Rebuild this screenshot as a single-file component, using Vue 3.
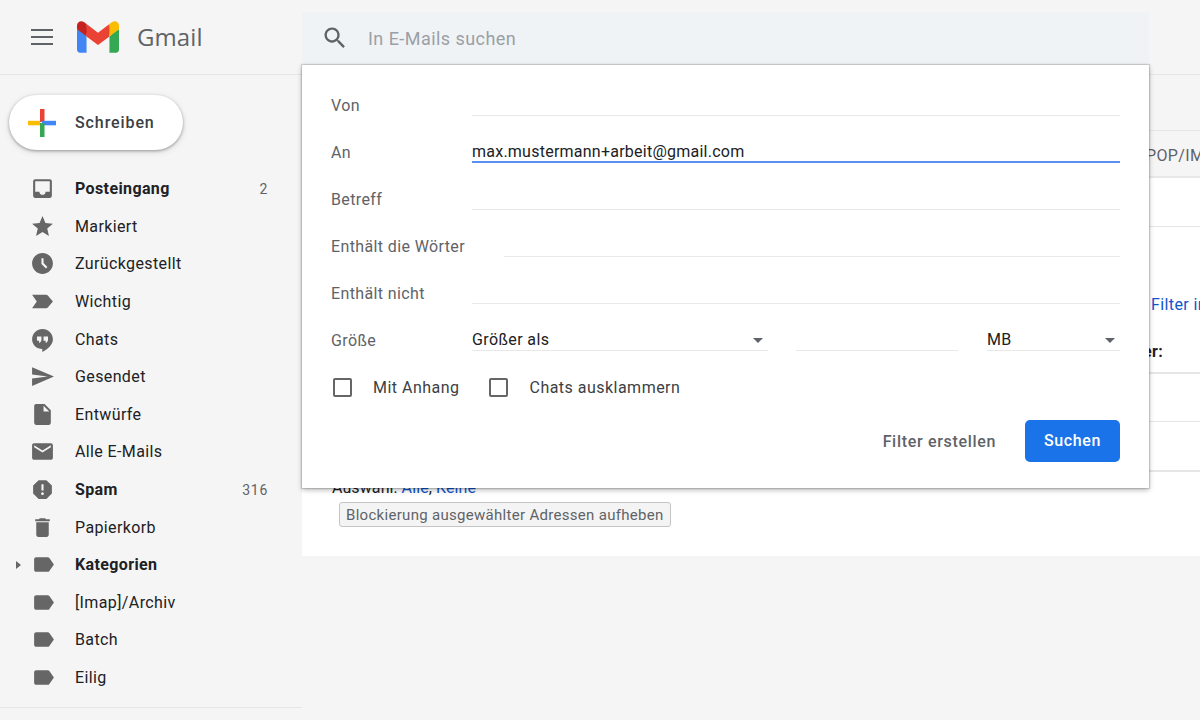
<script setup>
const P = {
  inbox: 'M19 3H5c-1.1 0-2 .9-2 2v14c0 1.1.9 2 2 2h14c1.1 0 2-.9 2-2V5c0-1.1-.9-2-2-2zm0 12h-4c0 1.66-1.34 3-3 3s-3-1.34-3-3H5V5h14v10z',
  star: 'M12 17.27L18.18 21l-1.64-7.03L22 9.24l-7.19-.61L12 2 9.19 8.63 2 9.24l5.46 4.73L5.82 21z',
  clock: 'M11.99 2C6.47 2 2 6.48 2 12s4.47 10 9.99 10C17.52 22 22 17.52 22 12S17.52 2 11.99 2zm3.3 14.71L11 12.41V7h2v4.59l3.71 3.71-1.42 1.41z',
  important: 'M2 18.5l4.5-6.5L2 5.5h13.5c.6 0 1.2.3 1.6.8L22 12l-4.9 5.7c-.4.5-1 .8-1.6.8z',
  chat: 'M12 2C6.500 2 2 6.400 2 11.800c0 5.300 4.300 9.400 9.800 9.400V24c5.700-2.700 10.200-7.300 10.200-12.200C22 6.400 17.500 2 12 2zM11 12.300c0 1.500-1 2.600-2.300 3v-2.200H6.700V9H11v3.300zm6.300 0c0 1.500-1 2.600-2.300 3v-2.200h-2V9h4.300v3.300z',
  send: 'M2.010 21L23 12 2.010 3 2 10l15 2-15 2z',
  draft: 'M14 2H6c-1.100 0-1.990.9-1.990 2L4 20c0 1.100.89 2 1.990 2H18c1.100 0 2-.9 2-2V8l-6-6zm-1 7V3.500L18.500 9H13z',
  mail: 'M20 4H4c-1.100 0-1.990.9-1.990 2L2 18c0 1.100.9 2 2 2h16c1.100 0 2-.9 2-2V6c0-1.100-.9-2-2-2zm0 4l-8 5-8-5V6l8 5 8-5v2z',
  spam: 'M15.730 3H8.270L3 8.270v7.460L8.270 21h7.460L21 15.730V8.270L15.730 3zM12 17.300c-.72 0-1.300-.58-1.300-1.300 0-.72.58-1.300 1.300-1.300.72 0 1.300.58 1.300 1.300 0 .72-.58 1.300-1.300 1.300zm1-4.300h-2V7h2v6z',
  trash: 'M6 19c0 1.100.9 2 2 2h8c1.100 0 2-.9 2-2V7H6v12zM19 4h-3.500l-1-1h-5l-1 1H5v2h14V4z',
  label: 'M17.630 5.840C17.270 5.330 16.670 5 16 5L5 5.010C3.900 5.010 3 5.900 3 7v10c0 1.100.9 1.990 2 1.990L16 19c.67 0 1.270-.33 1.630-.84L22 12l-4.370-6.160z',
}
const nav = [
  { t: 'Posteingang', i: 'inbox', b: true, n: '2' },
  { t: 'Markiert', i: 'star' },
  { t: 'Zurückgestellt', i: 'clock' },
  { t: 'Wichtig', i: 'important' },
  { t: 'Chats', i: 'chat' },
  { t: 'Gesendet', i: 'send' },
  { t: 'Entwürfe', i: 'draft' },
  { t: 'Alle E-Mails', i: 'mail' },
  { t: 'Spam', i: 'spam', b: true, n: '316' },
  { t: 'Papierkorb', i: 'trash' },
  { t: 'Kategorien', i: 'label', b: true, arrow: true },
  { t: '[Imap]/Archiv', i: 'label' },
  { t: 'Batch', i: 'label' },
  { t: 'Eilig', i: 'label' },
]
const fields = [
  { l: 'Von', v: '' },
  { l: 'An', v: 'max.mustermann+arbeit@gmail.com', focus: true },
  { l: 'Betreff', v: '' },
  { l: 'Enthält die Wörter', v: '', wide: true },
  { l: 'Enthält nicht', v: '' },
]
const search = 'M15.5 14h-.79l-.28-.27C15.41 12.59 16 11.11 16 9.5 16 5.91 13.09 3 9.5 3S3 5.91 3 9.5 5.91 16 9.5 16c1.61 0 3.09-.59 4.23-1.57l.27.28v.79l5 4.99L20.49 19l-4.99-5zm-6 0C7.010 14 5 11.990 5 9.500S7.010 5 9.500 5 14 7.010 14 9.500 11.990 14 9.500 14z'
</script>

<template>
  <div class="page">
    <header class="top">
      <div class="brand">
        <div class="burger"><i></i><i></i><i></i></div>
        <svg class="logo" viewBox="0 0 256 193">
          <path fill="#4285F4" d="M58.182 192.050V93.140L27.507 65.077 0 49.504v125.091c0 9.658 7.825 17.455 17.455 17.455h40.727z"/>
          <path fill="#34A853" d="M197.818 192.050h40.727c9.659 0 17.455-7.826 17.455-17.455V49.505l-31.156 17.837-27.026 25.798v98.910z"/>
          <path fill="#EA4335" d="M58.182 93.140l-4.174-38.647 4.174-36.989L128 69.868l69.818-52.364 4.669 34.992-4.669 40.644L128 145.504z"/>
          <path fill="#FBBC04" d="M197.818 17.504V93.140L256 49.504V26.231c0-21.585-24.640-33.890-41.890-20.945l-16.292 12.218z"/>
          <path fill="#C5221F" d="M0 49.504l26.759 20.070L58.182 93.140V17.504L41.890 5.286C24.610-7.660 0 4.646 0 26.230v23.273z"/>
        </svg>
        <span class="wordmark">Gmail</span>
      </div>
      <div class="searchbar">
        <svg class="searchicon" viewBox="0 0 24 24"><path :d="search" fill="#5f6368"/></svg>
        <span class="placeholder">In E-Mails suchen</span>
      </div>
    </header>

    <div class="body">
      <aside class="side">
        <div class="compose">
          <svg class="plus" viewBox="0 0 28 28">
            <rect x="12" y="0" width="4.500" height="13" fill="#ea4335"/>
            <rect x="14" y="11.800" width="14" height="4.500" fill="#4285f4"/>
            <rect x="12" y="14" width="4.500" height="14" fill="#34a853"/>
            <rect x="0" y="11.800" width="12" height="4.500" fill="#fbbc04"/>
          </svg>
          <span>Schreiben</span>
        </div>
        <ul class="nav">
          <li v-for="r in nav" :key="r.t" class="row" :class="{ bold: r.b }">
            <span class="slot"><i v-if="r.arrow" class="tri"></i></span>
            <svg class="ic" :class="{ lab: r.i === 'label' }" viewBox="0 0 24 24"><path :d="P[r.i]" fill="#666" fill-rule="evenodd"/></svg>
            <span class="rt">{{ r.t }}</span>
            <span v-if="r.n" class="count">{{ r.n }}</span>
          </li>
        </ul>
      </aside>

      <main class="main">
        <div class="toolbar"></div>
        <div class="tabs"><span>POP/IMAP</span></div>
        <div class="panel">
          <div class="line l1"></div>
          <div class="filterlink"><a>Filter importieren</a></div>
          <div class="blocked"><b>er:</b></div>
          <div class="line l2"></div>
          <div class="line l3"></div>
          <div class="line l4"></div>
          <div class="choose">Auswahl: <a>Alle</a>, <a>Keine</a></div>
          <div class="unblockwrap"><span class="unblock">Blockierung ausgewählter Adressen aufheben</span></div>
        </div>
      </main>
    </div>

    <section class="popup">
      <div v-for="f in fields" :key="f.l" class="frow">
        <label class="flabel" :class="{ auto: f.wide }">{{ f.l }}</label>
        <div class="field" :class="{ focus: f.focus }">{{ f.v }}</div>
      </div>
      <div class="frow">
        <label class="flabel">Größe</label>
        <div class="sel s1"><span>Größer als</span><i class="caret"></i></div>
        <div class="sizeinput"></div>
        <div class="sel s2"><span>MB</span><i class="caret"></i></div>
      </div>
      <div class="checks">
        <i class="box"></i><span class="cl c1">Mit Anhang</span>
        <i class="box"></i><span class="cl">Chats ausklammern</span>
      </div>
      <div class="actions">
        <span class="fbtn">Filter erstellen</span>
        <span class="go">Suchen</span>
      </div>
    </section>
  </div>
</template>

<style>
html, body { margin: 0; background: #f5f5f5; }
</style>

<style scoped>
.page {
  position: relative;
  width: 1200px;
  height: 720px;
  overflow: hidden;
  background: #f5f5f5;
  font-family: Roboto, "Liberation Sans", sans-serif;
  font-size: 16px;
  letter-spacing: .38px;
  color: #202124;
}
.top {
  height: 74px;
  display: flex;
  border-bottom: 1px solid #e6e6e6;
}
.brand { width: 302px; display: flex; align-items: center; padding-left: 31px; box-sizing: border-box; }
.burger { width: 22px; display: flex; flex-direction: column; gap: 5px; }
.burger i { display: block; height: 2px; background: #5f6368; }
.logo { width: 42px; height: 32px; margin-left: 24px; margin-top: -1px; }
.wordmark {
  margin-left: 18px;
  margin-top: -2px;
  font-family: "Open Sans", sans-serif;
  font-size: 24px;
  letter-spacing: .1px;
  color: #5f6368;
}
.searchbar {
  width: 847px;
  height: 53px;
  margin-top: 12px;
  display: flex;
  align-items: flex-start;
  padding-top: 12px;
  box-sizing: border-box;
  background: #f0f3f5;
}
.searchicon { width: 28px; height: 28px; margin-left: 19px; }
.placeholder { margin-left: 19px; font-size: 18px; line-height: 30px; letter-spacing: .45px; color: #9aa0a6; }
.body { display: flex; height: 645px; }
.side { width: 302px; height: 633px; flex: none; border-bottom: 1px solid #e6e6e6; box-sizing: border-box; }
.compose {
  margin: 20px 0 0 9px;
  width: 174px;
  height: 55px;
  border-radius: 28px;
  background: #fff;
  box-shadow: 0 1px 3px rgba(60,64,67,.45), 0 2px 6px rgba(60,64,67,.15);
  display: flex;
  align-items: center;
  box-sizing: border-box;
  padding-left: 19px;
  color: #3c4043;
  font-weight: 500;
  letter-spacing: .9px;
}
.plus { width: 28px; height: 28px; margin-right: 19px; }
.nav { list-style: none; margin: 20px 0 0; padding: 0; }
.row {
  height: 37.6px;
  display: flex;
  align-items: center;
  padding-right: 34px;
  color: #202124;
}
.slot { width: 30px; display: flex; padding-left: 16px; box-sizing: border-box; }
.tri { width: 0; height: 0; border-left: 5px solid #666; border-top: 4.500px solid transparent; border-bottom: 4.500px solid transparent; }
.ic { width: 25px; height: 25px; margin-right: 20px; }
.ic.lab { margin-left: 1px; margin-right: 19px; }
.rt { flex: 1; }
.bold .rt { font-weight: 700; }
.count { font-size: 14px; letter-spacing: .7px; color: #5f6368; font-weight: 400; }
.main { flex: 1; min-width: 0; }
.toolbar { height: 55px; border-bottom: 1px solid #e6e6e6; }
.tabs {
  height: 45px;
  border-bottom: 2px solid #e8e8e8;
  padding-left: 844px;
  line-height: 50px;
  font-size: 16px;
  white-space: nowrap;
  color: #5f6368;
  overflow: hidden;
}
.panel { background: #fff; height: 378px; overflow: hidden; }
.line { height: 1px; background: #e6e6e6; }
.l1 { margin-top: 48px; }
.filterlink { margin-top: 67px; padding-left: 849px; line-height: 22px; white-space: nowrap; color: #1155cc; }
.blocked { margin-top: 25px; padding-left: 841px; line-height: 22px; white-space: nowrap; color: #202124; font-size: 16px; }
.l2 { margin-top: 9px; height: 2px; }
.l3 { margin-top: 47px; }
.l4 { margin-top: 48px; height: 2px; }
.choose { margin-top: 5px; padding-left: 30px; line-height: 22px; color: #222; letter-spacing: .1px; }
.choose a { color: #1155cc; }
.unblockwrap { padding: 3px 0 0 37px; }
.unblock {
  display: inline-block;
  height: 25px;
  line-height: 24px;
  box-sizing: border-box;
  padding: 0 6px;
  border: 1px solid #c4c4c4;
  border-radius: 3px;
  background: #f4f4f4;
  color: #5f6368;
  font-size: 15px;
  letter-spacing: .3px;
}
.popup {
  position: absolute;
  left: 302px;
  top: 65px;
  width: 847px;
  box-sizing: border-box;
  padding: 4px 29px 26px;
  background: #fff;
  box-shadow: 0 0 1px 1px rgba(0,0,0,.14), 0 2px 5px rgba(0,0,0,.28);
}
.frow { display: flex; align-items: flex-end; height: 47px; line-height: 22px; }
.flabel { width: 141px; flex: none; color: #5f6368; margin-bottom: -1px; }
.flabel.auto { width: auto; margin-right: 39px; }
.field { flex: 1; min-height: 20px; line-height: 20px; border-bottom: 1px solid #e8e8e8; color: #202124; letter-spacing: .24px; }
.field.focus { border-bottom: 2px solid #5b8ff0; line-height: 18px; min-height: 18px; }
.sel {
  display: flex;
  justify-content: space-between;
  align-items: center;
  border-bottom: 1px solid #e8e8e8;
  height: 20px;
  padding-right: 5px;
  box-sizing: content-box;
}
.s1 { width: 291px; }
.s2 { width: 128px; margin-left: 29px; }
.caret { width: 0; height: 0; border-top: 5px solid #5f6368; border-left: 5.500px solid transparent; border-right: 5.500px solid transparent; }
.sizeinput { width: 162px; height: 20px; margin-left: 28px; border-bottom: 1px solid #e8e8e8; }
.checks { display: flex; align-items: center; height: 22px; margin-top: 25px; padding-left: 2px; letter-spacing: .48px; }
.box { width: 15px; height: 15px; border: 2px solid #666; border-radius: 2px; flex: none; }
.cl { margin-left: 21px; color: #3c4043; }
.c1 { margin-right: 30px; }
.actions { display: flex; justify-content: flex-end; align-items: center; margin-top: 22px; }
.fbtn { color: #5f6368; font-weight: 500; margin-right: 29px; letter-spacing: .68px; }
.go {
  width: 95px;
  height: 42px;
  line-height: 42px;
  text-align: center;
  background: #1a73e8;
  color: #fff;
  font-weight: 500;
  border-radius: 5px;
  letter-spacing: .6px;
}
</style>
